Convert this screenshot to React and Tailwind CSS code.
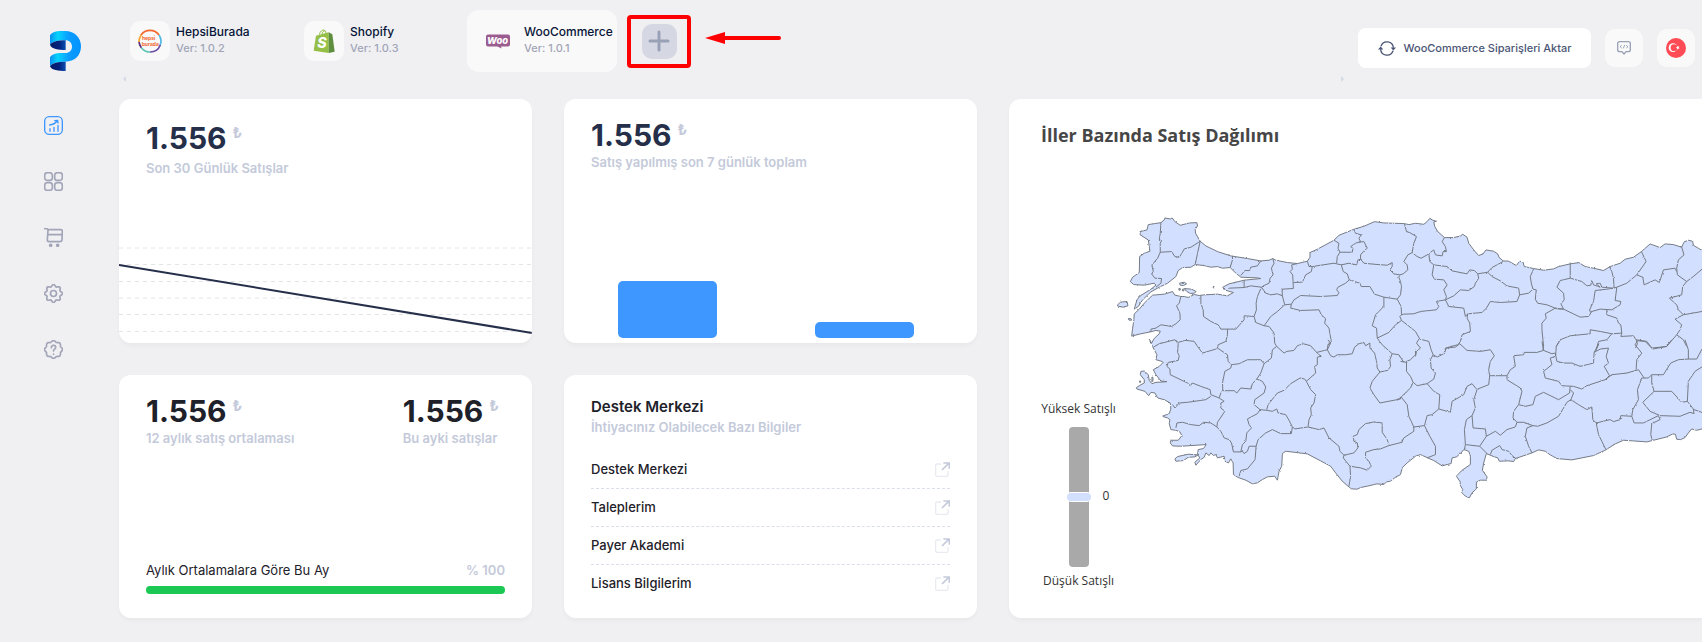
import React from "react";

const STORES = [
  { name: "HepsiBurada", version: "1.0.2", Logo: HepsiLogo },
  { name: "Shopify", version: "1.0.3", Logo: ShopifyLogo },
  { name: "WooCommerce", version: "1.0.1", Logo: WooLogo, active: true },
];

const SUPPORT_LINKS = ["Destek Merkezi", "Taleplerim", "Payer Akademi", "Lisans Bilgilerim"];

// MAP DATA
const MAINLAND =
  "180,68 190,60 192,54 208,57 214,54 222,65 238,76 266,69 288,68 290,78 283,88 284,100 298,124 315,138 350,155 390,168 440,176 480,183 505,181 516,176 525,181 560,188 590,191 620,184 628,172 628,158 650,148 700,121 715,106 760,88 790,79 822,65 850,69 912,71 925,74 945,70 970,73 980,65 988,55 995,60 1008,64 1000,66 1003,80 1012,95 1032,113 1060,113 1080,108 1087,103 1100,112 1105,130 1120,150 1135,167 1148,162 1157,150 1180,154 1192,162 1196,172 1208,183 1225,184 1248,197 1258,184 1268,186 1272,200 1300,206 1330,211 1360,207 1375,200 1410,192 1436,188 1455,200 1480,205 1510,212 1530,200 1560,190 1575,178 1600,172 1624,155 1650,132 1680,143 1695,132 1720,134 1745,142 1752,126 1765,121 1778,124 1780,136 1795,145 1830,165 1830,684 1806,688 1790,692 1775,688 1765,700 1755,714 1742,720 1730,719 1726,704 1718,703 1700,712 1660,722 1640,727 1600,724 1570,722 1545,733 1515,752 1480,768 1415,781 1370,777 1350,766 1335,755 1315,751 1295,760 1245,777 1240,786 1225,784 1197,785 1192,775 1175,769 1158,762 1150,790 1146,812 1160,832 1158,842 1140,842 1128,848 1128,868 1115,880 1107,895 1095,890 1083,878 1087,870 1078,855 1080,848 1068,830 1085,812 1110,795 1110,770 1105,755 1090,750 1085,757 1068,772 1055,775 1052,792 1040,795 1025,799 1000,783 980,774 960,765 945,770 920,790 905,805 900,825 885,833 870,845 858,847 850,855 830,853 800,860 780,864 770,869 752,868 740,858 725,845 705,820 690,800 660,784 620,763 580,758 555,755 545,762 543,800 535,815 530,842 522,830 500,832 485,840 470,850 455,853 435,842 412,834 398,825 397,790 390,778 383,790 372,785 370,770 350,775 345,765 338,768 330,760 325,768 315,760 310,773 300,780 285,797 282,788 297,775 290,765 292,750 308,747 316,735 240,740 215,739 208,730 210,722 232,722 243,708 237,697 225,692 210,690 205,672 207,660 200,655 184,650 205,642 210,628 208,610 190,600 170,595 162,580 150,578 143,588 132,575 108,568 106,564 120,555 130,550 130,540 118,525 120,515 130,514 142,525 145,542 153,552 165,548 198,546 180,544 165,525 157,510 175,500 187,488 180,484 165,480 168,465 160,450 155,440 147,425 145,418 152,430 160,416 175,402 178,394 165,392 150,396 120,402 92,409 95,385 98,365 100,342 115,328 130,310 155,286 190,283 215,275 222,286 240,290 250,290 262,293 280,284 295,287 310,285 350,283 380,288 398,278 370,270 366,262 385,252 430,241 480,236 470,234 420,232 400,215 388,203 365,205 350,200 330,202 310,197 283,194 270,202 245,203 232,212 225,230 200,250 175,262 150,276 125,300 112,320 100,328 108,300 118,288 150,268 165,256 160,250 130,256 98,254 88,245 95,232 115,218 116,170 130,160 147,154 142,120 118,105 117,95 138,90 142,74";

const ISLANDS = [
  "48,317 58,307 78,305 81,318 66,322 54,320",
  "236,250 250,247 257,252 248,257 238,256",
  "250,266 272,268 286,275 280,280 268,281 258,275",
  "222,778 230,771 262,764 292,766 282,772 262,773 248,783 225,785",
  "234,266 238,266 238,271 234,271",
  "245,268 249,268 249,273 245,273",
  "337,260 340,260 340,264 337,264",
  "82,356 90,357 92,361 84,361",
  "116,544 119,544 119,548 116,548",
  "153,532 156,533 156,545 153,544",
];

const BORDERS_NW = [
  "180,68 178,100 175,120 182,122 178,130 178,157 170,175 153,195 157,215 152,222 162,235 182,236 180,250 165,262",
  "178,157 212,155 222,170 235,172 243,160 250,147 270,142 298,124",
  "298,124 290,160 283,194",
  "395,168 395,180 388,203",
  "480,183 470,198 450,202 447,212 432,212 421,226",
  "516,176 520,190 512,205 517,225 508,235 505,250 490,257 482,262 450,258 430,263 385,265",
  "430,241 430,263",
  "482,262 495,280 510,285 530,282 545,288 544,268 578,266 577,245 576,225 568,215 575,208 573,195 590,191",
  "620,184 625,200 635,200 632,215 615,225 605,247 578,248",
  "635,200 660,196 700,190 722,195",
  "700,121 715,130 712,145 718,157 710,170 708,190",
  "718,157 755,157 757,145 750,140 765,130 780,125 775,115 782,105 765,100 760,88",
  "775,127 790,125 800,145 788,155 780,165 780,178 772,180 768,195 745,190 722,195",
  "780,178 790,190 820,193 860,196 875,188 875,200 868,210 880,222 898,225 908,222",
  "722,195 728,215 740,222 746,240 735,250 712,262 708,270 715,278 710,287 660,290 600,287 580,300 572,313 570,325",
  "545,288 552,315 572,313",
  "570,325 600,332 655,330 662,345 675,357 672,370 685,385 692,425 682,435 680,450",
  "746,240 778,250 782,260 808,260 822,283 850,292 890,298 900,285 903,260 900,245 895,232 898,225",
  "850,292 850,320 835,335 825,345 815,378 828,385 830,415 845,435 875,462",
  "830,415 865,398 885,375 903,362",
  "890,298 902,320 903,345 898,350 903,362",
  "552,315 530,335 510,350 490,378",
  "482,262 470,290 466,310 467,330 460,350 465,368 490,378 505,380 520,400 522,430 528,440",
  "460,350 430,348 430,360 405,388 360,388 352,375 330,365 308,350 307,330 300,310 300,287",
  "380,388 380,405 375,425 352,435 350,445",
  "240,290 235,310 227,318 237,340 238,360 225,372 212,380 180,375 165,385 150,388 150,396",
];

const BORDERS_SW = [
  "158,22 175,12 222,0 232,12 230,38 235,48 232,62 202,68 198,80 207,88 208,105 260,130 268,138 275,130 300,140 328,150 330,165 355,175",
  "225,2 232,8 252,2 265,3 280,5 290,20 305,40 345,28 350,25 380,45 382,65 392,75 390,85 372,95 365,130 366,153 360,160 355,175",
  "392,75 415,72 440,60 480,60 490,72 512,55 515,30 528,20",
  "366,153 400,153 408,160 420,145 450,148 455,132 468,118 480,100 490,72",
  "528,20 550,40 558,35 580,32 590,18 608,12 630,18 648,38 680,30 690,10 682,15",
  "648,38 655,45 662,50 650,52 650,75 642,80 645,100 617,125",
  "617,125 612,118 598,115 570,132 550,152 530,160 510,185 502,195 498,210",
  "468,118 485,125 495,142 490,160 462,180 460,195 478,210 498,212 515,215 528,208 532,220 555,225 565,242 575,262 572,282 540,282 515,270 495,280 472,300 466,320 445,320 440,335 430,342 425,335 420,337 398,337 392,310 385,300 370,295 360,275 348,262 350,248 372,215 360,205 360,190 370,185 355,175",
  "478,210 470,222 440,238 445,255 452,265 438,280 435,305 425,315 420,337",
  "466,320 463,360 440,388 420,393 415,410",
  "330,170 315,180 260,188 235,190 222,205 215,195",
  "225,265 228,250 245,248 270,255 295,258 308,248 330,250 348,262",
  "617,125 630,150 645,165 640,190 630,205 632,225 625,240 622,262 582,268 576,262",
  "622,262 655,270 670,265 685,295 715,320 718,335 730,347 728,355 748,380 750,410 745,440",
  "730,347 760,340 772,325 770,310 760,305 758,290 770,285 775,270 795,252 820,247 845,250 845,278 860,300 865,318",
  "748,380 780,385 800,392 812,380 805,365 795,355 795,338 820,330 840,328 865,318 905,308 905,300",
  "680,30 690,48 700,52 710,45 735,45 755,42 762,22 775,12 790,8 795,18 808,10 808,25 822,40 828,65 830,85 838,97 815,125 808,145 820,165 838,190 900,178",
  "838,97 862,92 870,80 868,60 875,42 895,45 910,68",
  "690,10 682,0",
];

const BORDERS_NE = [
  "12,72 18,95 28,98 48,110 40,130 35,158 22,165 10,185 20,195 22,210 8,222",
  "35,158 50,170 62,175 80,165 100,150 105,165 125,168 128,155 138,155 135,140 125,125 132,113",
  "85,160 88,185 100,195 140,200 155,213 200,222 208,210 222,212 232,222 262,217 275,203 308,185",
  "100,195 95,225 102,238 130,240 140,255 130,270 138,290 135,300",
  "232,222 235,235 225,250 222,260 205,272 180,270 160,288 135,300",
  "262,217 275,230 300,243 320,258 355,265 358,285",
  "358,285 385,280 398,268 408,270 405,298 412,310 440,315 470,327 490,328",
  "400,207 390,230 393,250 398,268",
  "358,285 350,305 300,308 270,305 258,325 245,338 202,342 195,350 190,325 145,320 135,300",
  "135,300 108,305 115,320 108,330 60,335 40,342 10,343 3,345",
  "202,342 200,355 208,370 210,395 185,405 180,425 172,435 135,445 132,462",
  "3,362 20,375 45,395 58,418 85,425 92,450 98,465",
  "55,418 48,430 60,445 48,455 45,470",
  "510,188 510,235 480,242 470,262 490,280 492,300 482,312 490,328 540,352 565,350 575,335",
  "510,235 545,245 560,258 572,256 575,242 580,255 600,262 588,252 600,250 605,262 640,265 650,262",
  "640,265 620,268 585,272 580,305 567,333 575,335 600,328 635,330 660,315 662,305 645,302 650,262",
  "628,200 635,215 640,235 642,265",
  "650,262 680,250 710,225 738,185 724,155",
  "710,225 728,232 732,255 765,240 778,248 790,210 825,205 830,215",
  "845,142 852,165 835,180 830,205 832,225 860,245",
  "930,200 906,208 880,230 860,245 848,260 845,285 808,295 830,315 835,330 850,345",
  "930,328 906,335 850,345 825,358 845,375 840,390 830,405",
  "620,330 620,345 650,355 655,370 662,375 665,400 635,402 600,395 570,390 570,402 510,408 480,420 468,440",
  "490,328 465,325 435,342 438,355 425,370 425,390 430,440 428,450",
  "665,400 662,410 700,408 708,420 740,425 758,448 800,440 830,405 850,420 860,440",
  "635,402 620,420 595,425 588,450",
  "708,420 712,432 706,445",
];

const BORDERS_SE = [
  "45,30 45,45 30,60 18,65 18,95 30,110 38,128 50,138 80,132 100,118 105,100 92,85 90,60 98,45",
  "0,65 20,68",
  "98,45 110,52 130,42 138,25 165,22 178,12 200,32 240,35 270,30 282,48 270,65 265,90 268,108 265,135 232,148",
  "268,108 320,108 320,120 360,145 365,155 355,195",
  "320,108 330,90 345,80 340,48 370,45 372,38 410,38 430,32 425,5",
  "430,32 455,42 465,40 470,65 490,70 515,70 540,80 560,75 580,70 582,38 596,12 588,30",
  "480,0 468,20 466,50",
  "465,50 450,55 455,75 430,95 435,115 475,125 485,138 520,140 545,148 560,138 615,120 628,108 612,80 625,70 618,50 625,25 600,28 582,38",
  "510,140 508,160 475,180 430,158 405,170 398,195 375,200 355,195",
  "355,195 340,215 338,235 350,248 370,248 398,258 380,265 375,290 385,320 395,340",
  "398,258 412,260 440,250 475,230 490,205 500,188 512,180 520,160 510,150",
  "512,180 535,195 560,210 575,202 578,240 588,250 595,285 605,305 617,330",
  "588,250 630,240 640,246 660,240 662,228 695,230",
  "695,230 698,210 715,180 712,150 725,115 745,115 755,105",
  "615,120 635,105 680,100 715,90 732,115",
  "708,90 710,60 725,40 705,15 712,3 735,5 755,25 800,20 815,0",
  "755,105 790,105 812,70 835,60 865,58 890,58 906,28",
  "855,0 865,30 865,58",
  "755,105 755,130 762,155 815,155 845,188 862,185 865,125 885,95 916,75",
  "762,155 728,188 750,215 780,228 840,230 870,218 882,222 880,208 862,185",
  "882,210 916,222",
  "695,230 702,250 730,250 775,228 780,240 755,252 752,285 757,303",
  "38,128 30,145 2,172 20,195 25,230 40,262 72,258 80,228 95,225 115,208 118,165 100,155 80,132",
  "40,262 40,275 10,295 5,305",
  "2,172 -10,182",
  "115,208 150,218 155,185 190,165 200,140 215,132 230,150 220,180 225,205 215,228 198,240 192,270 195,315 192,330",
  "215,228 218,265 255,268 258,290 238,320 195,315",
  "72,258 88,290 105,320 105,345 80,355",
  "258,290 285,275 300,287 320,270 345,262 350,248",
  "238,320 260,342",
  "270,345 275,332 298,318 305,330 325,335 335,348 348,358",
];

function Borders({ lines, transform }) {
  return (
    <g transform={transform}>
      {lines.map((points) => (
        <polyline key={points} points={points} />
      ))}
    </g>
  );
}

function TurkeyMap() {
  return (
    <svg viewBox="45 0 1761 930" className="block w-full" role="img" aria-label="İller haritası">
      <defs>
        <filter id="coast" x="0" y="0" width="100%" height="100%">
          <feTurbulence type="fractalNoise" baseFrequency="0.16" numOctaves="2" seed="4" />
          <feDisplacementMap in="SourceGraphic" scale="6" xChannelSelector="R" yChannelSelector="G" />
        </filter>
      </defs>
      <g fill="#d2dffe" stroke="#747a85" strokeWidth="3" strokeLinejoin="round" filter="url(#coast)">
        <polygon points={MAINLAND} />
        {ISLANDS.map((points) => (
          <polygon key={points} points={points} />
        ))}
        <g fill="none">
          <Borders lines={BORDERS_NW} />
          <Borders lines={BORDERS_SW} transform="translate(0 420)" />
          <Borders lines={BORDERS_NE} transform="translate(900 0)" />
          <Borders lines={BORDERS_SE} transform="translate(900 420)" />
        </g>
      </g>
    </svg>
  );
}

// LOGOS
function BrandLogo() {
  return (
    <svg viewBox="0 0 93 120" className="h-10 w-[31px]" aria-hidden="true">
      <defs>
        <linearGradient id="ribbon" x1="0" x2="1">
          <stop offset="0" stopColor="#0a8ff0" />
          <stop offset="0.25" stopColor="#05d3fb" />
          <stop offset="0.6" stopColor="#0a9dff" />
          <stop offset="1" stopColor="#0492ff" />
        </linearGradient>
        <linearGradient id="fold" x1="0" x2="1">
          <stop offset="0" stopColor="#021a66" />
          <stop offset="0.6" stopColor="#03227e" />
          <stop offset="1" stopColor="#0a4fb4" />
        </linearGradient>
      </defs>
      <path
        d="M0 12C6 4 18 0 30 0H46C74 0 93 20 93 46C93 74 74 92 46 92C24 92 6 96 0 106V79C6 69 20 66 32 66H46C58 66 66 58 66 47C66 36 58 28 46 28C24 28 6 32 0 41Z"
        fill="url(#ribbon)"
      />
      <path d="M0 41C6 32 24 28 47 28V57C26 57 4 54 0 41Z" fill="url(#fold)" />
      <path d="M0 106C6 96 24 92 47 92V120C26 120 4 118 0 106Z" fill="url(#fold)" />
    </svg>
  );
}

function HepsiLogo() {
  return (
    <svg viewBox="0 0 72 72" className="size-6" aria-hidden="true">
      <g fill="none" strokeWidth="5">
        <path d="M9 18A33 33 0 0 1 63 18" stroke="#f2682c" />
        <path d="M63 18A33 33 0 0 1 66 50" stroke="#4fb9e3" />
        <path d="M67 48A33 33 0 0 1 36 69" stroke="#6b4ba3" />
        <path d="M37 69A33 33 0 0 1 10 56" stroke="#5fc6b4" />
        <path d="M10 56A33 33 0 0 1 3 38" stroke="#5b2a7d" />
        <path d="M3 39A33 33 0 0 1 10 17" stroke="#f6a431" />
      </g>
      <g fill="#f2682c" fontFamily="Inter, sans-serif" fontWeight="700" fontSize="15">
        <text x="12" y="34">hepsi</text>
        <text x="11" y="50">burada</text>
      </g>
    </svg>
  );
}

function ShopifyLogo() {
  return (
    <svg viewBox="0 0 64 72" className="h-6 w-[22px]" aria-hidden="true">
      <path d="M18 17C20 7 27 2 32 3C37 5 38 10 38 15M26 15C28 7 33 3 37 8" fill="none" stroke="#95bf47" strokeWidth="3" />
      <path d="M8 20L46 10V72L1 65Z" fill="#95bf47" />
      <path d="M46 10L57 16L64 68L46 72Z" fill="#5e8e3e" />
      <text x="12" y="58" fill="#fff" fontFamily="Inter, sans-serif" fontStyle="italic" fontWeight="800" fontSize="43">
        S
      </text>
    </svg>
  );
}

function WooLogo() {
  return (
    <svg viewBox="0 0 72 44" className="h-[15px] w-6" aria-hidden="true">
      <path d="M6 1H66Q72 1 72 7V31Q72 37 66 37H45L47 43L34 37H6Q0 37 0 31V7Q0 1 6 1Z" fill="#9b5c8f" />
      <text x="3" y="29" fill="#fff" fontFamily="Inter, sans-serif" fontStyle="italic" fontWeight="800" fontSize="28">
        Woo
      </text>
    </svg>
  );
}

function TurkeyFlag() {
  return (
    <svg viewBox="0 0 60 60" className="size-5" aria-hidden="true">
      <circle cx="30" cy="30" r="30" fill="#ff4b55" />
      <circle cx="21" cy="29" r="13" fill="#fff" />
      <circle cx="24" cy="29" r="10" fill="#ff4b55" />
      <path d="M29 29L33 27.500L33.500 23L36.500 26.500L40.500 25L38.500 29L40.500 33L36.500 31.500L33.500 35L33 30.500Z" fill="#fff" />
    </svg>
  );
}

// ICONS
function ringPath(bumps, radius, depth) {
  const points = [];
  for (let i = 0; i < 96; i++) {
    const a = (i / 96) * Math.PI * 2;
    const r = radius + depth * Math.cos(bumps * a);
    points.push(`${(28.5 + r * Math.sin(a)).toFixed(2)} ${(28.5 - r * Math.cos(a)).toFixed(2)}`);
  }
  return `M${points.join("L")}Z`;
}

function NavIcon({ children }) {
  return (
    <svg
      viewBox="0 0 57 57"
      className="size-[19px]"
      fill="none"
      stroke="currentColor"
      strokeWidth="5"
      strokeLinecap="round"
      strokeLinejoin="round"
      aria-hidden="true"
    >
      {children}
    </svg>
  );
}

const NAV = [
  {
    label: "Panel",
    active: true,
    icon: (
      <>
        <rect x="2" y="2" width="53" height="53" rx="14" strokeWidth="4" />
        <path d="M18 46V38M30 46V34M42 46V28" strokeWidth="4" />
        <path d="M17 27C26 26 33 23 39 15M32 14L41 13L42 21" strokeWidth="4" />
      </>
    ),
  },
  {
    label: "Modüller",
    icon: (
      <>
        <rect x="2" y="2" width="23" height="23" rx="8" />
        <rect x="32" y="2" width="23" height="23" rx="8" />
        <rect x="2" y="32" width="23" height="23" rx="8" />
        <rect x="32" y="32" width="23" height="23" rx="8" />
      </>
    ),
  },
  {
    label: "Siparişler",
    icon: (
      <>
        <path d="M2 2H8Q12 2 12 6V8Q12 5 16 5H50Q55 5 55 10L54 36Q53 41 48 41H15Q10 41 10 36L12 6M12 20H54" />
        <circle cx="20" cy="52" r="3" fill="currentColor" />
        <circle cx="41" cy="52" r="3" fill="currentColor" />
      </>
    ),
  },
  {
    label: "Ayarlar",
    icon: (
      <>
        <path d={ringPath(8, 24, 3)} />
        <circle cx="28.5" cy="28.5" r="9" />
      </>
    ),
  },
  {
    label: "Yardım",
    icon: (
      <>
        <path d={ringPath(8, 25, 2)} />
        <path d="M22 23C22 13 36 14 35 23C34 28 28 27 28.500 33M28.500 42V42.500" />
      </>
    ),
  },
];

function SyncIcon() {
  return (
    <svg viewBox="0 0 54 44" className="h-[15px] w-[18px]" fill="none" stroke="#4b5675" strokeWidth="4" aria-hidden="true">
      <path d="M9 15A19 19 0 0 1 46 20M45 29A19 19 0 0 1 8 24" />
      <path d="M38 19H54L46 28ZM0 25H16L8 16Z" fill="#4b5675" stroke="none" />
    </svg>
  );
}

function CodeBubbleIcon() {
  return (
    <svg viewBox="0 0 42 42" className="size-[14px]" fill="none" stroke="#99a1b7" strokeWidth="4" strokeLinejoin="round" aria-hidden="true">
      <path d="M8 2H34Q40 2 40 8V26Q40 32 34 32H27L21 39L15 32H8Q2 32 2 26V8Q2 2 8 2Z" />
      <path d="M14 13L9 17L14 21M28 13L33 17L28 21M23 12L19 22" strokeWidth="3" />
    </svg>
  );
}

function ExternalIcon() {
  return (
    <svg viewBox="0 0 45 45" className="size-[15px]" fill="none" aria-hidden="true">
      <path d="M18 6H6Q2 6 2 10V39Q2 43 6 43H35Q39 43 39 39V27" stroke="#e9ebf1" strokeWidth="4" />
      <path d="M21 24L41 4M25 3H43V20" stroke="#c4cada" strokeWidth="5" />
    </svg>
  );
}

// TEMPLATES
function Card({ className, children }) {
  return (
    <section className={`overflow-hidden rounded-xl bg-white shadow-[0_3px_4px_rgba(0,0,0,0.03)] ${className}`}>
      {children}
    </section>
  );
}

function Amount({ label, color, spacing = "mt-0.5" }) {
  return (
    <div>
      <div className="flex items-start gap-1.5">
        <span className={`text-[30px] leading-[30px] font-bold ${color}`}>1.556</span>
        <span className="text-[15px] leading-5 font-bold text-[#c4cada]">₺</span>
      </div>
      <p className={`text-[13px] leading-5 font-semibold text-[#c4cada] ${spacing}`}>{label}</p>
    </div>
  );
}

function StoreItem({ store }) {
  const { name, version, Logo, active } = store;
  return (
    <a
      href="#"
      className={`flex h-[62px] w-[150px] items-center gap-1.5 rounded-xl pl-[11px] ${active ? "bg-[#f9f9f9]" : ""}`}
    >
      <span className="flex size-10 shrink-0 items-center justify-center rounded-[10px] bg-[#f9f9f9]">
        <Logo />
      </span>
      <span className="flex flex-col whitespace-nowrap">
        <span className="text-xs leading-4 font-medium text-[#071437]">{name}</span>
        <span className="pb-0.5 text-[11px] leading-4 font-medium text-[#a1a5b7]">Ver: {version}</span>
      </span>
    </a>
  );
}

function Header() {
  return (
    <header className="flex h-[99px] items-start pr-[7px]">
      <div className="flex flex-1 flex-col pt-2.5">
        <div className="flex items-center">
          <div className="flex gap-6">
            {STORES.map((store) => (
              <StoreItem key={store.name} store={store} />
            ))}
          </div>
          <div className="ml-2.5 flex h-[53px] w-16 items-center justify-center rounded-sm border-4 border-[#ff0000]">
            <button
              aria-label="Mağaza ekle"
              className="flex size-[35px] items-center justify-center rounded-[10px] bg-[#d5d8e2]"
            >
              <svg viewBox="0 0 22 22" className="size-[22px]" stroke="#99a1b7" strokeWidth="3" strokeLinecap="round">
                <path d="M11 2V20M2 11H20" />
              </svg>
            </button>
          </div>
          <svg viewBox="0 0 76 12" className="mb-1.5 ml-3.5 h-3 w-[76px]" aria-hidden="true">
            <path d="M16 6H74" stroke="#f00" strokeWidth="4" strokeLinecap="round" />
            <path d="M0 6L20 0V12Z" fill="#f00" />
          </svg>
        </div>
        <div className="mt-1 flex justify-between px-1">
          <svg viewBox="0 0 3 6" className="h-1.5 w-[3px]" fill="#d5dae6">
            <path d="M3 0V6L0 3Z" />
          </svg>
          <svg viewBox="0 0 3 6" className="h-1.5 w-[3px]" fill="#d5dae6">
            <path d="M0 0V6L3 3Z" />
          </svg>
        </div>
      </div>
      <div className="flex items-center gap-3.5 pt-7 pl-2.5">
        <button className="flex h-10 w-[233px] items-center justify-center gap-2 rounded-lg bg-white text-[11px] font-medium whitespace-nowrap text-[#4b5675]">
          <SyncIcon />
          WooCommerce Siparişleri Aktar
        </button>
        <button aria-label="Entegrasyon" className="flex size-[38px] items-center justify-center rounded-[10px] bg-[#f9f9f9]">
          <CodeBubbleIcon />
        </button>
        <button aria-label="Türkçe" className="flex size-[38px] items-center justify-center rounded-[10px] bg-[#f9f9f9]">
          <TurkeyFlag />
        </button>
      </div>
    </header>
  );
}

function App() {
  return (
    <div className="flex min-h-screen overflow-hidden bg-[#f0f0f3] font-[Inter,sans-serif]">
      <aside className="w-[119px] shrink-0">
        <a href="#" aria-label="Ana sayfa" className="mt-[31px] ml-[50px] block w-[31px]">
          <BrandLogo />
        </a>
        <nav className="mt-[45px] ml-11 flex w-5 flex-col gap-[37px]">
          {NAV.map((item) => (
            <a
              key={item.label}
              href="#"
              aria-label={item.label}
              className={item.active ? "text-[#3e97ff]" : "text-[#a1a5b7]"}
            >
              <NavIcon>{item.icon}</NavIcon>
            </a>
          ))}
        </nav>
      </aside>

      <div className="min-w-0 flex-1">
        <Header />
        <main className="grid grid-cols-[413fr_413fr_693fr] grid-rows-[244px_243px] gap-8">
          <Card className="flex flex-col justify-between">
            <div className="px-[27px] pt-6">
              <Amount label="Son 30 Günlük Satışlar" color="text-[#252f4a]" spacing="mt-[5px]" />
            </div>
            <svg viewBox="0 0 413 103" className="block w-full" aria-hidden="true">
              <path
                d="M0 8H413M0 24.500H413M0 41.500H413M0 58H413M0 74.500H413M0 91.500H413"
                stroke="#e4e4e8"
                strokeDasharray="4 4"
              />
              <path d="M0 25L413 93" stroke="#252f4a" strokeWidth="2" />
            </svg>
          </Card>

          <Card className="flex flex-col justify-between">
            <div className="px-[27px] pt-[21px]">
              <Amount label="Satış yapılmış son 7 günlük toplam" color="text-[#252f4a]" />
            </div>
            <svg viewBox="0 0 413 63" className="block w-full" fill="#3e97ff" aria-hidden="true">
              <rect x="54" y="1" width="99" height="57" rx="5" />
              <rect x="251" y="42" width="99" height="16" rx="5" />
            </svg>
          </Card>

          <Card className="row-span-2 rounded-r-none pt-6 pl-8">
            <h2 className="font-['Open_Sans',sans-serif] text-lg leading-6 font-bold text-[#464646]">
              İller Bazında Satış Dağılımı
            </h2>
            <div className="flex pt-[53px]">
              <div className="flex w-[75px] shrink-0 flex-col items-center pt-[201px] font-['Open_Sans',sans-serif] text-xs leading-4 whitespace-nowrap text-[#333]">
                <span>Yüksek Satışlı</span>
                <div className="relative mt-2.5 h-[140px] w-5 rounded-sm bg-[#a9a9a9]">
                  <div className="absolute top-[66px] -left-0.5 h-2 w-6 rounded-full bg-[#d2dffe] ring-1 ring-white" />
                  <span className="absolute top-[61px] left-[34px]">0</span>
                </div>
                <span className="mt-1.5">Düşük Satışlı</span>
              </div>
              <div className="min-w-0 flex-1">
                <TurkeyMap />
              </div>
            </div>
          </Card>

          <Card className="flex flex-col justify-between px-[27px] pt-[21px] pb-6">
            <div className="flex justify-between">
              <Amount label="12 aylık satış ortalaması" color="text-[#1e2129]" />
              <div className="pr-1.5">
                <Amount label="Bu ayki satışlar" color="text-[#1e2129]" />
              </div>
            </div>
            <div>
              <div className="flex justify-between text-[13px] leading-5">
                <span className="text-[#1e2129]">Aylık Ortalamalara Göre Bu Ay</span>
                <span className="font-semibold text-[#c4cada]">% 100</span>
              </div>
              <div className="mt-1.5 h-2 rounded-full bg-[#e8fff3]">
                <div className="h-2 w-full rounded-full bg-[#1bc854]" />
              </div>
            </div>
          </Card>

          <Card className="px-[27px] pt-[22px]">
            <h3 className="text-[15px] leading-5 font-semibold text-[#1e2129]">Destek Merkezi</h3>
            <p className="text-[13px] leading-5 font-semibold text-[#c4cada]">İhtiyacınız Olabilecek Bazı Bilgiler</p>
            <ul className="mt-3.5 divide-y divide-dashed divide-[#dbdfe9]">
              {SUPPORT_LINKS.map((link) => (
                <li key={link}>
                  <a href="#" className="flex h-[37px] items-center justify-between text-[13px] font-medium text-[#1e2129]">
                    {link}
                    <ExternalIcon />
                  </a>
                </li>
              ))}
            </ul>
          </Card>
        </main>
      </div>
    </div>
  );
}

export default App;
